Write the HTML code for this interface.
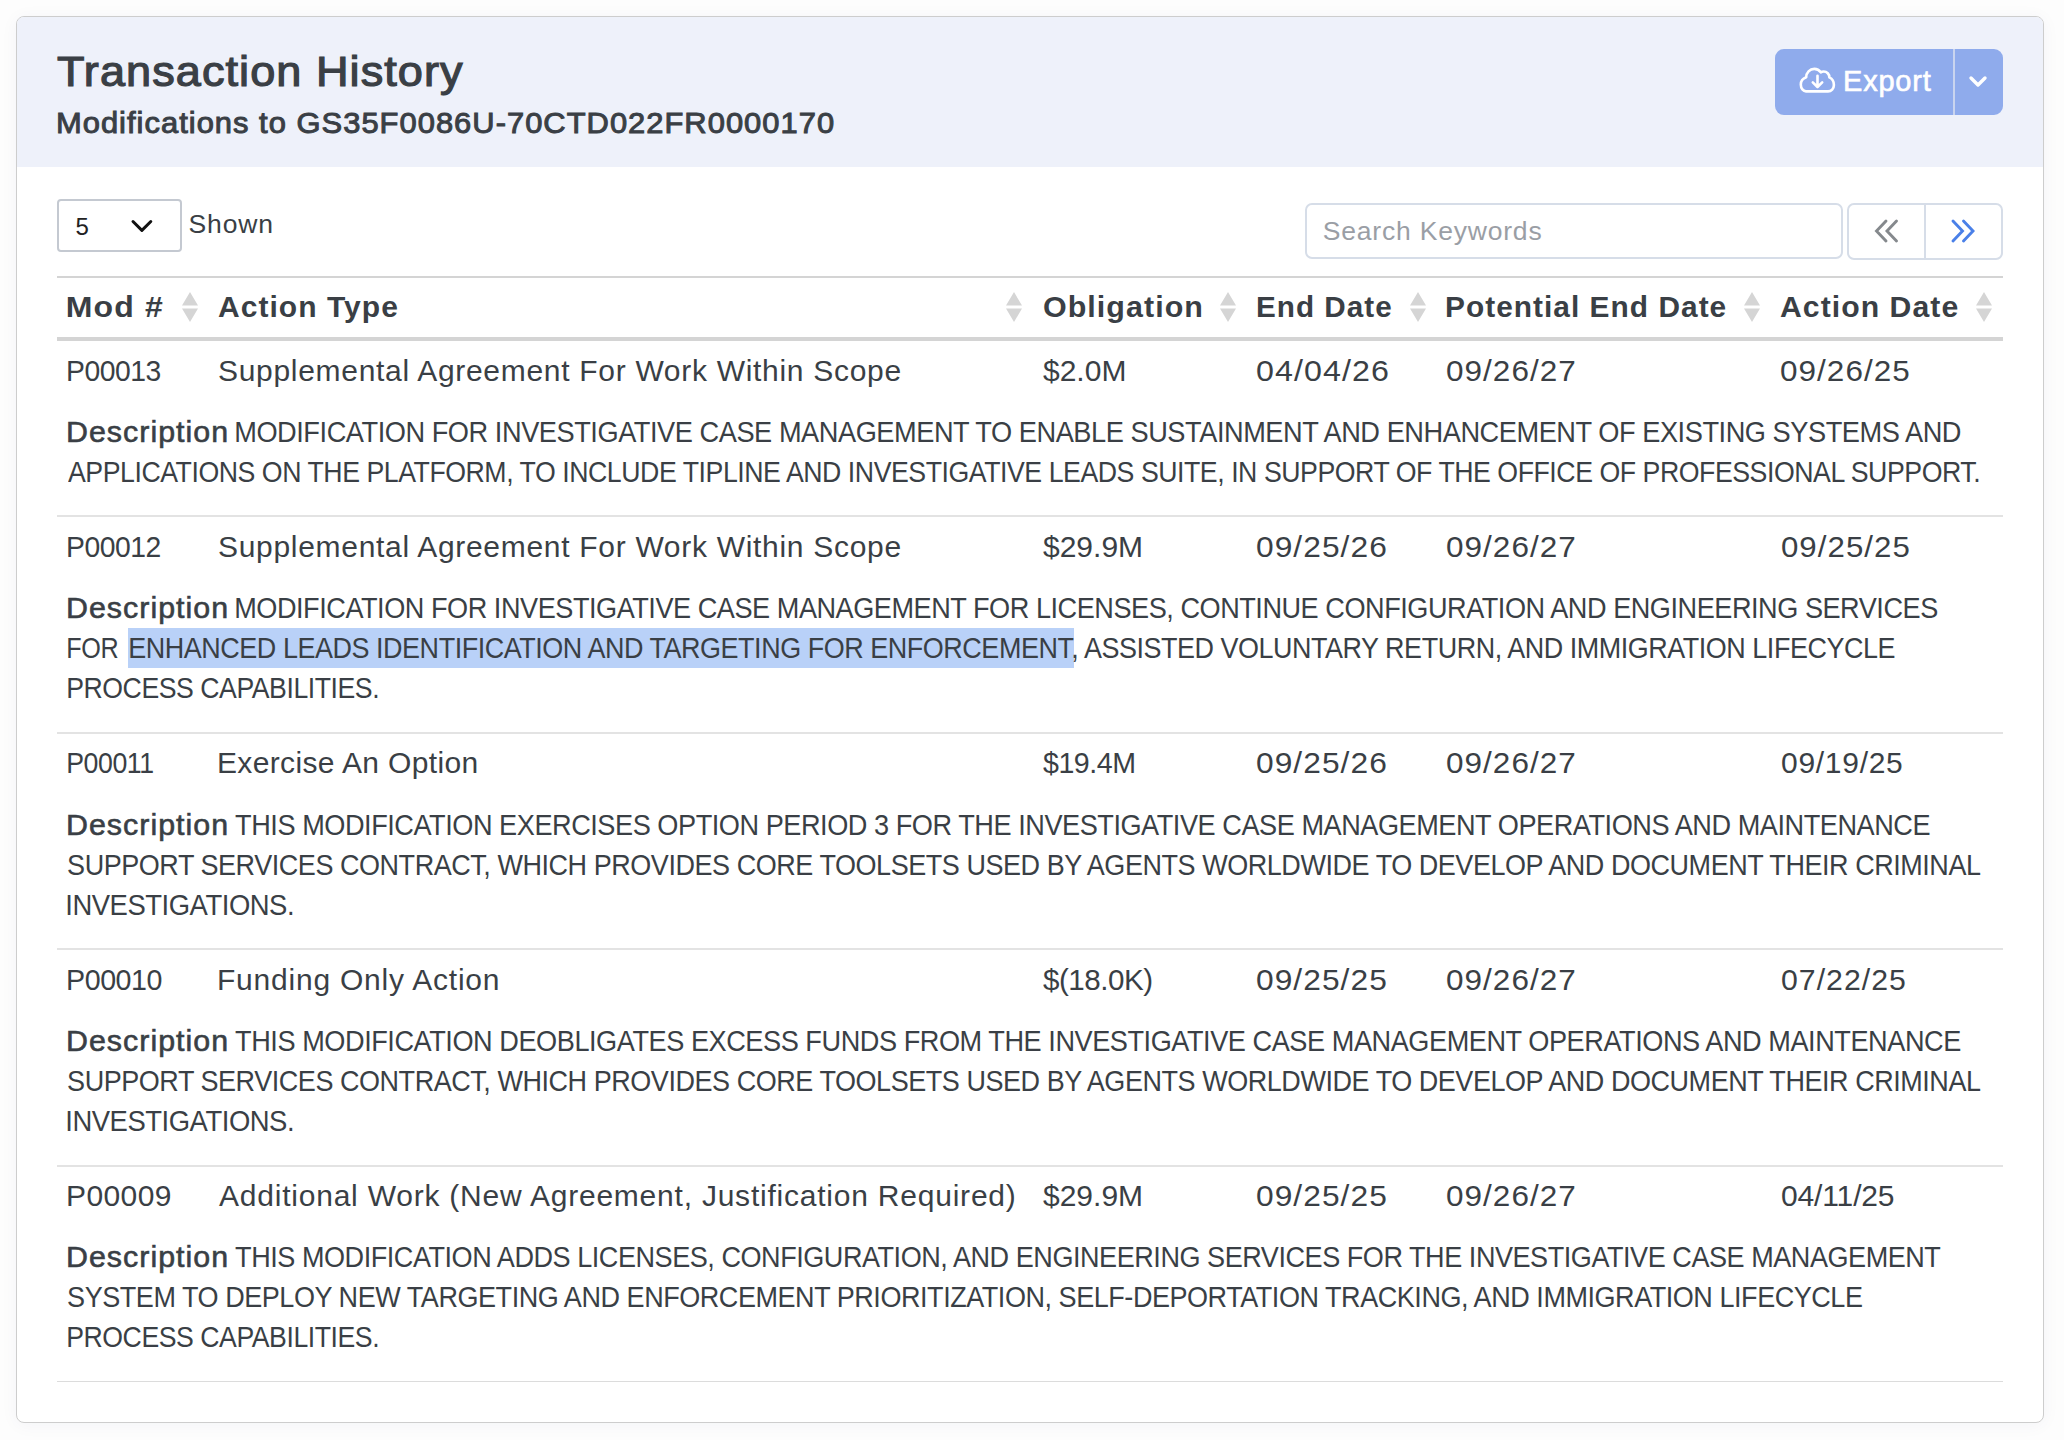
<!DOCTYPE html>
<html><head><meta charset="utf-8"><style>
html,body{margin:0;padding:0;background:#fdfdfd;width:2064px;height:1440px;overflow:hidden}
body{position:relative;font-family:"Liberation Sans",sans-serif}
.card{position:absolute;left:16px;top:16px;width:2026px;height:1405px;border:1px solid #cdcdcd;border-radius:8px;background:#fff;box-shadow:0 2px 18px rgba(30,50,110,0.045);overflow:hidden}
.hdr{position:absolute;left:0;top:0;right:0;height:150px;background:#eef1fa}
.t{position:absolute;white-space:nowrap}
.s{position:absolute;width:18px;height:32px}
.hr{position:absolute;left:57px;width:1946px;height:2px;background:#e3e3e3}
</style></head><body>
<div class="card"><div class="hdr"></div></div>
<!-- export button -->
<div style="position:absolute;left:1775px;top:49px;width:228px;height:66px;border-radius:9px;background:#8fabec"></div>
<div style="position:absolute;left:1953px;top:49px;width:2px;height:66px;background:#c9d4ef"></div>
<svg style="position:absolute;left:1795px;top:60px" width="45" height="40" viewBox="0 0 45 40">
<path d="M11 31.4 H33 C36.3 31.4 38.9 28.6 38.9 25 C38.9 21.4 36.8 18.6 34.4 17.4 C34.4 14.2 31.9 11.5 28.7 11.5 C27.6 11.5 26.6 11.8 25.8 12.3 C24.3 10.2 21.9 8.9 19.3 8.9 C14.8 8.9 11.2 12.6 11.2 17.3 C8.2 18.4 5.8 21.2 5.8 24.6 C5.8 28.4 8.3 31.4 11 31.4 Z" fill="none" stroke="#fff" stroke-width="2.6" stroke-linejoin="round"/>
<path d="M22.5 15.8 V27 M17.8 22.3 L22.5 27 L27.2 22.3" fill="none" stroke="#fff" stroke-width="2.6" stroke-linecap="round" stroke-linejoin="round"/>
</svg>
<svg style="position:absolute;left:1968px;top:74px" width="20" height="16" viewBox="0 0 20 16"><path d="M3 4 L10 11 L17 4" fill="none" stroke="#fff" stroke-width="3.4" stroke-linecap="round" stroke-linejoin="round"/></svg>
<!-- select -->
<div style="position:absolute;left:57px;top:199px;width:121px;height:49px;border:2px solid #c4c9d1;border-radius:4px;background:#fff"></div>
<svg style="position:absolute;left:128px;top:216px" width="28" height="20" viewBox="0 0 28 20"><path d="M5 5.5 L13.9 14.4 L22.8 5.5" fill="none" stroke="#111" stroke-width="3" stroke-linecap="round" stroke-linejoin="round"/></svg>
<!-- search -->
<div style="position:absolute;left:1305px;top:203px;width:534px;height:52px;border:2px solid #d6dde8;border-radius:7px;background:#fff"></div>
<div style="position:absolute;left:1847px;top:203px;width:152px;height:53px;border:2px solid #d6dde8;border-radius:7px;background:#fff"></div>
<div style="position:absolute;left:1924px;top:204px;width:2px;height:55px;background:#d6dde8"></div>
<svg style="position:absolute;left:1870px;top:215px" width="32" height="32" viewBox="0 0 32 32"><path d="M16 6 L6.5 16 L16 26 M26.5 6 L17 16 L26.5 26" fill="none" stroke="#85898d" stroke-width="2.9" stroke-linecap="round" stroke-linejoin="miter"/></svg>
<svg style="position:absolute;left:1947px;top:215px" width="32" height="32" viewBox="0 0 32 32"><path d="M6 6 L15.5 16 L6 26 M16.5 6 L26 16 L16.5 26" fill="none" stroke="#4a80e8" stroke-width="2.9" stroke-linecap="round" stroke-linejoin="miter"/></svg>
<!-- table lines -->
<div style="position:absolute;left:57px;top:276px;width:1946px;height:2px;background:#d4d4d4"></div>
<div style="position:absolute;left:57px;top:337px;width:1946px;height:4px;background:#d4d4d4"></div>
<div class="hr" style="top:515px"></div><div class="hr" style="top:732px"></div><div class="hr" style="top:948px"></div><div class="hr" style="top:1165px"></div>
<div style="position:absolute;left:57px;top:1381px;width:1946px;height:1px;background:#dcdcdc"></div>
<div class="s" style="left:181.0px;top:291px"><svg width="18" height="32" viewBox="0 0 18 32"><path d="M9 1 L17 14.5 L1 14.5 Z M1 17.5 L17 17.5 L9 31 Z" fill="#d5d5d5"/></svg></div><div class="s" style="left:1004.5px;top:291px"><svg width="18" height="32" viewBox="0 0 18 32"><path d="M9 1 L17 14.5 L1 14.5 Z M1 17.5 L17 17.5 L9 31 Z" fill="#d5d5d5"/></svg></div><div class="s" style="left:1219.0px;top:291px"><svg width="18" height="32" viewBox="0 0 18 32"><path d="M9 1 L17 14.5 L1 14.5 Z M1 17.5 L17 17.5 L9 31 Z" fill="#d5d5d5"/></svg></div><div class="s" style="left:1408.5px;top:291px"><svg width="18" height="32" viewBox="0 0 18 32"><path d="M9 1 L17 14.5 L1 14.5 Z M1 17.5 L17 17.5 L9 31 Z" fill="#d5d5d5"/></svg></div><div class="s" style="left:1742.5px;top:291px"><svg width="18" height="32" viewBox="0 0 18 32"><path d="M9 1 L17 14.5 L1 14.5 Z M1 17.5 L17 17.5 L9 31 Z" fill="#d5d5d5"/></svg></div><div class="s" style="left:1975.0px;top:291px"><svg width="18" height="32" viewBox="0 0 18 32"><path d="M9 1 L17 14.5 L1 14.5 Z M1 17.5 L17 17.5 L9 31 Z" fill="#d5d5d5"/></svg></div>
<!-- highlight -->
<div style="position:absolute;left:128px;top:628px;width:946px;height:40px;background:#b9d1f8"></div>
<div class="t" style="left:57.0px;top:51.2px;font-size:42.5px;line-height:42.5px;font-weight:400;color:#3a3f45;letter-spacing:1.000px;transform:scaleX(1.0604);transform-origin:1px 0;-webkit-text-stroke:1.2px #3a3f45">Transaction History</div>
<div class="t" style="left:56.0px;top:107.6px;font-size:30px;line-height:30px;font-weight:400;color:#3a3f45;letter-spacing:1.000px;transform:scaleX(1.0292);transform-origin:2px 0;-webkit-text-stroke:1.0px #3a3f45">Modifications to GS35F0086U-70CTD022FR0000170</div>
<div class="t" style="left:1843.0px;top:66.7px;font-size:29px;line-height:29px;font-weight:400;color:#ffffff;letter-spacing:0.800px;transform:scaleX(1.0000);transform-origin:2px 0;-webkit-text-stroke:0.6px #fff">Export</div>
<div class="t" style="left:188.5px;top:211.0px;font-size:26.5px;line-height:26.5px;font-weight:400;color:#3a3f45;letter-spacing:0.875px;transform:scaleX(1.0000);transform-origin:1px 0">Shown</div>
<div class="t" style="left:1322.7px;top:217.8px;font-size:26.5px;line-height:26.5px;font-weight:400;color:#9a9ea5;letter-spacing:0.807px;transform:scaleX(1.0000);transform-origin:1px 0">Search Keywords</div>
<div class="t" style="left:75.5px;top:214.5px;font-size:24px;line-height:24px;font-weight:400;color:#222;letter-spacing:0.000px;transform:scaleX(1.0000);transform-origin:1px 0">5</div>
<div class="t" style="left:66.0px;top:292.7px;font-size:29px;line-height:29px;font-weight:700;color:#3a3f45;letter-spacing:1.000px;transform:scaleX(1.1047);transform-origin:2px 0">Mod #</div>
<div class="t" style="left:218.0px;top:292.7px;font-size:29px;line-height:29px;font-weight:700;color:#3a3f45;letter-spacing:1.000px;transform:scaleX(1.0349);transform-origin:1px 0">Action Type</div>
<div class="t" style="left:1042.5px;top:292.7px;font-size:29px;line-height:29px;font-weight:700;color:#3a3f45;letter-spacing:1.000px;transform:scaleX(1.0500);transform-origin:1px 0">Obligation</div>
<div class="t" style="left:1256.0px;top:292.7px;font-size:29px;line-height:29px;font-weight:700;color:#3a3f45;letter-spacing:1.000px;transform:scaleX(1.0231);transform-origin:2px 0">End Date</div>
<div class="t" style="left:1445.0px;top:292.7px;font-size:29px;line-height:29px;font-weight:700;color:#3a3f45;letter-spacing:1.000px;transform:scaleX(1.0296);transform-origin:2px 0">Potential End Date</div>
<div class="t" style="left:1780.0px;top:292.7px;font-size:29px;line-height:29px;font-weight:700;color:#3a3f45;letter-spacing:1.000px;transform:scaleX(1.0414);transform-origin:1px 0">Action Date</div>
<div class="t" style="left:66.0px;top:355.6px;font-size:30px;line-height:30px;font-weight:400;color:#3a3f45;letter-spacing:-0.500px;transform:scaleX(0.9436);transform-origin:2px 0">P00013</div>
<div class="t" style="left:218.0px;top:355.6px;font-size:30px;line-height:30px;font-weight:400;color:#3a3f45;letter-spacing:0.698px;transform:scaleX(1.0000);transform-origin:1px 0">Supplemental Agreement For Work Within Scope</div>
<div class="t" style="left:1043.0px;top:355.6px;font-size:30px;line-height:30px;font-weight:400;color:#3a3f45;letter-spacing:0.000px;transform:scaleX(1.0000);transform-origin:0px 0">$2.0M</div>
<div class="t" style="left:1256.0px;top:355.6px;font-size:30px;line-height:30px;font-weight:400;color:#3a3f45;letter-spacing:1.000px;transform:scaleX(1.0738);transform-origin:1px 0">04/04/26</div>
<div class="t" style="left:1446.0px;top:355.6px;font-size:30px;line-height:30px;font-weight:400;color:#3a3f45;letter-spacing:1.000px;transform:scaleX(1.0496);transform-origin:1px 0">09/26/27</div>
<div class="t" style="left:1780.0px;top:355.6px;font-size:30px;line-height:30px;font-weight:400;color:#3a3f45;letter-spacing:1.000px;transform:scaleX(1.0492);transform-origin:1px 0">09/26/25</div>
<div class="t" style="left:66.0px;top:531.6px;font-size:30px;line-height:30px;font-weight:400;color:#3a3f45;letter-spacing:-0.500px;transform:scaleX(0.9436);transform-origin:2px 0">P00012</div>
<div class="t" style="left:218.0px;top:531.6px;font-size:30px;line-height:30px;font-weight:400;color:#3a3f45;letter-spacing:0.698px;transform:scaleX(1.0000);transform-origin:1px 0">Supplemental Agreement For Work Within Scope</div>
<div class="t" style="left:1043.0px;top:531.6px;font-size:30px;line-height:30px;font-weight:400;color:#3a3f45;letter-spacing:0.000px;transform:scaleX(1.0000);transform-origin:0px 0">$29.9M</div>
<div class="t" style="left:1256.0px;top:531.6px;font-size:30px;line-height:30px;font-weight:400;color:#3a3f45;letter-spacing:1.000px;transform:scaleX(1.0574);transform-origin:1px 0">09/25/26</div>
<div class="t" style="left:1446.0px;top:531.6px;font-size:30px;line-height:30px;font-weight:400;color:#3a3f45;letter-spacing:1.000px;transform:scaleX(1.0496);transform-origin:1px 0">09/26/27</div>
<div class="t" style="left:1781.0px;top:531.6px;font-size:30px;line-height:30px;font-weight:400;color:#3a3f45;letter-spacing:1.000px;transform:scaleX(1.0410);transform-origin:1px 0">09/25/25</div>
<div class="t" style="left:66.0px;top:747.6px;font-size:30px;line-height:30px;font-weight:400;color:#3a3f45;letter-spacing:-0.500px;transform:scaleX(0.8901);transform-origin:2px 0">P00011</div>
<div class="t" style="left:217.0px;top:747.6px;font-size:30px;line-height:30px;font-weight:400;color:#3a3f45;letter-spacing:0.353px;transform:scaleX(1.0000);transform-origin:2px 0">Exercise An Option</div>
<div class="t" style="left:1043.0px;top:747.6px;font-size:30px;line-height:30px;font-weight:400;color:#3a3f45;letter-spacing:-0.500px;transform:scaleX(0.9529);transform-origin:0px 0">$19.4M</div>
<div class="t" style="left:1256.0px;top:747.6px;font-size:30px;line-height:30px;font-weight:400;color:#3a3f45;letter-spacing:1.000px;transform:scaleX(1.0574);transform-origin:1px 0">09/25/26</div>
<div class="t" style="left:1446.0px;top:747.6px;font-size:30px;line-height:30px;font-weight:400;color:#3a3f45;letter-spacing:1.000px;transform:scaleX(1.0496);transform-origin:1px 0">09/26/27</div>
<div class="t" style="left:1781.0px;top:747.6px;font-size:30px;line-height:30px;font-weight:400;color:#3a3f45;letter-spacing:0.714px;transform:scaleX(1.0000);transform-origin:1px 0">09/19/25</div>
<div class="t" style="left:66.0px;top:964.6px;font-size:30px;line-height:30px;font-weight:400;color:#3a3f45;letter-spacing:-0.500px;transform:scaleX(0.9538);transform-origin:2px 0">P00010</div>
<div class="t" style="left:217.0px;top:964.6px;font-size:30px;line-height:30px;font-weight:400;color:#3a3f45;letter-spacing:0.778px;transform:scaleX(1.0000);transform-origin:2px 0">Funding Only Action</div>
<div class="t" style="left:1043.0px;top:964.6px;font-size:30px;line-height:30px;font-weight:400;color:#3a3f45;letter-spacing:-0.500px;transform:scaleX(0.9863);transform-origin:0px 0">$(18.0K)</div>
<div class="t" style="left:1256.0px;top:964.6px;font-size:30px;line-height:30px;font-weight:400;color:#3a3f45;letter-spacing:1.000px;transform:scaleX(1.0574);transform-origin:1px 0">09/25/25</div>
<div class="t" style="left:1446.0px;top:964.6px;font-size:30px;line-height:30px;font-weight:400;color:#3a3f45;letter-spacing:1.000px;transform:scaleX(1.0496);transform-origin:1px 0">09/26/27</div>
<div class="t" style="left:1781.0px;top:964.6px;font-size:30px;line-height:30px;font-weight:400;color:#3a3f45;letter-spacing:1.000px;transform:scaleX(1.0082);transform-origin:1px 0">07/22/25</div>
<div class="t" style="left:66.0px;top:1181.1px;font-size:30px;line-height:30px;font-weight:400;color:#3a3f45;letter-spacing:0.400px;transform:scaleX(1.0000);transform-origin:2px 0">P00009</div>
<div class="t" style="left:219.0px;top:1181.1px;font-size:30px;line-height:30px;font-weight:400;color:#3a3f45;letter-spacing:0.778px;transform:scaleX(1.0000);transform-origin:0px 0">Additional Work (New Agreement, Justification Required)</div>
<div class="t" style="left:1043.0px;top:1181.1px;font-size:30px;line-height:30px;font-weight:400;color:#3a3f45;letter-spacing:0.000px;transform:scaleX(1.0000);transform-origin:0px 0">$29.9M</div>
<div class="t" style="left:1256.0px;top:1181.1px;font-size:30px;line-height:30px;font-weight:400;color:#3a3f45;letter-spacing:1.000px;transform:scaleX(1.0574);transform-origin:1px 0">09/25/25</div>
<div class="t" style="left:1446.0px;top:1181.1px;font-size:30px;line-height:30px;font-weight:400;color:#3a3f45;letter-spacing:1.000px;transform:scaleX(1.0496);transform-origin:1px 0">09/26/27</div>
<div class="t" style="left:1781.0px;top:1181.1px;font-size:30px;line-height:30px;font-weight:400;color:#3a3f45;letter-spacing:-0.143px;transform:scaleX(1.0000);transform-origin:1px 0">04/11/25</div>
<div class="t" style="left:66.0px;top:416.6px;font-size:30px;line-height:30px;font-weight:400;color:#3a3f45;letter-spacing:1.000px;transform:scaleX(1.0128);transform-origin:2px 0;-webkit-text-stroke:0.6px #3a3f45">Description</div>
<div class="t" style="left:233.5px;top:416.6px;font-size:30px;line-height:30px;font-weight:400;color:#3a3f45;letter-spacing:-0.500px;transform:scaleX(0.9064);transform-origin:2px 0">MODIFICATION FOR INVESTIGATIVE CASE MANAGEMENT TO ENABLE SUSTAINMENT AND ENHANCEMENT OF EXISTING SYSTEMS AND</div>
<div class="t" style="left:68.0px;top:456.6px;font-size:30px;line-height:30px;font-weight:400;color:#3a3f45;letter-spacing:-0.500px;transform:scaleX(0.8892);transform-origin:0px 0">APPLICATIONS ON THE PLATFORM, TO INCLUDE TIPLINE AND INVESTIGATIVE LEADS SUITE, IN SUPPORT OF THE OFFICE OF PROFESSIONAL SUPPORT.</div>
<div class="t" style="left:66.0px;top:592.6px;font-size:30px;line-height:30px;font-weight:400;color:#3a3f45;letter-spacing:1.000px;transform:scaleX(1.0128);transform-origin:2px 0;-webkit-text-stroke:0.6px #3a3f45">Description</div>
<div class="t" style="left:233.5px;top:592.6px;font-size:30px;line-height:30px;font-weight:400;color:#3a3f45;letter-spacing:-0.500px;transform:scaleX(0.9029);transform-origin:2px 0">MODIFICATION FOR INVESTIGATIVE CASE MANAGEMENT FOR LICENSES, CONTINUE CONFIGURATION AND ENGINEERING SERVICES</div>
<div class="t" style="left:66.0px;top:632.6px;font-size:30px;line-height:30px;font-weight:400;color:#3a3f45;letter-spacing:-0.500px;transform:scaleX(0.8390);transform-origin:2px 0">FOR</div>
<div class="t" style="left:127.5px;top:632.6px;font-size:30px;line-height:30px;font-weight:400;color:#3a3f45;letter-spacing:-0.500px;transform:scaleX(0.8983);transform-origin:2px 0">ENHANCED LEADS IDENTIFICATION AND TARGETING FOR ENFORCEMENT</div>
<div class="t" style="left:1071.0px;top:632.6px;font-size:30px;line-height:30px;font-weight:400;color:#3a3f45;letter-spacing:-0.500px;transform:scaleX(0.8976);transform-origin:3px 0">, ASSISTED VOLUNTARY RETURN, AND IMMIGRATION LIFECYCLE</div>
<div class="t" style="left:66.0px;top:672.6px;font-size:30px;line-height:30px;font-weight:400;color:#3a3f45;letter-spacing:-0.500px;transform:scaleX(0.8879);transform-origin:2px 0">PROCESS CAPABILITIES.</div>
<div class="t" style="left:66.0px;top:809.6px;font-size:30px;line-height:30px;font-weight:400;color:#3a3f45;letter-spacing:1.000px;transform:scaleX(1.0128);transform-origin:2px 0;-webkit-text-stroke:0.6px #3a3f45">Description</div>
<div class="t" style="left:234.5px;top:809.6px;font-size:30px;line-height:30px;font-weight:400;color:#3a3f45;letter-spacing:-0.500px;transform:scaleX(0.9039);transform-origin:1px 0">THIS MODIFICATION EXERCISES OPTION PERIOD 3 FOR THE INVESTIGATIVE CASE MANAGEMENT OPERATIONS AND MAINTENANCE</div>
<div class="t" style="left:67.0px;top:849.6px;font-size:30px;line-height:30px;font-weight:400;color:#3a3f45;letter-spacing:-0.500px;transform:scaleX(0.8998);transform-origin:1px 0">SUPPORT SERVICES CONTRACT, WHICH PROVIDES CORE TOOLSETS USED BY AGENTS WORLDWIDE TO DEVELOP AND DOCUMENT THEIR CRIMINAL</div>
<div class="t" style="left:65.0px;top:889.6px;font-size:30px;line-height:30px;font-weight:400;color:#3a3f45;letter-spacing:-0.500px;transform:scaleX(0.9143);transform-origin:3px 0">INVESTIGATIONS.</div>
<div class="t" style="left:66.0px;top:1025.6px;font-size:30px;line-height:30px;font-weight:400;color:#3a3f45;letter-spacing:1.000px;transform:scaleX(1.0128);transform-origin:2px 0;-webkit-text-stroke:0.6px #3a3f45">Description</div>
<div class="t" style="left:234.5px;top:1025.6px;font-size:30px;line-height:30px;font-weight:400;color:#3a3f45;letter-spacing:-0.500px;transform:scaleX(0.9045);transform-origin:1px 0">THIS MODIFICATION DEOBLIGATES EXCESS FUNDS FROM THE INVESTIGATIVE CASE MANAGEMENT OPERATIONS AND MAINTENANCE</div>
<div class="t" style="left:67.0px;top:1065.6px;font-size:30px;line-height:30px;font-weight:400;color:#3a3f45;letter-spacing:-0.500px;transform:scaleX(0.8998);transform-origin:1px 0">SUPPORT SERVICES CONTRACT, WHICH PROVIDES CORE TOOLSETS USED BY AGENTS WORLDWIDE TO DEVELOP AND DOCUMENT THEIR CRIMINAL</div>
<div class="t" style="left:65.0px;top:1105.6px;font-size:30px;line-height:30px;font-weight:400;color:#3a3f45;letter-spacing:-0.500px;transform:scaleX(0.9143);transform-origin:3px 0">INVESTIGATIONS.</div>
<div class="t" style="left:66.0px;top:1241.6px;font-size:30px;line-height:30px;font-weight:400;color:#3a3f45;letter-spacing:1.000px;transform:scaleX(1.0128);transform-origin:2px 0;-webkit-text-stroke:0.6px #3a3f45">Description</div>
<div class="t" style="left:234.5px;top:1241.6px;font-size:30px;line-height:30px;font-weight:400;color:#3a3f45;letter-spacing:-0.500px;transform:scaleX(0.9011);transform-origin:1px 0">THIS MODIFICATION ADDS LICENSES, CONFIGURATION, AND ENGINEERING SERVICES FOR THE INVESTIGATIVE CASE MANAGEMENT</div>
<div class="t" style="left:67.0px;top:1281.6px;font-size:30px;line-height:30px;font-weight:400;color:#3a3f45;letter-spacing:-0.500px;transform:scaleX(0.9002);transform-origin:1px 0">SYSTEM TO DEPLOY NEW TARGETING AND ENFORCEMENT PRIORITIZATION, SELF-DEPORTATION TRACKING, AND IMMIGRATION LIFECYCLE</div>
<div class="t" style="left:66.0px;top:1321.6px;font-size:30px;line-height:30px;font-weight:400;color:#3a3f45;letter-spacing:-0.500px;transform:scaleX(0.8879);transform-origin:2px 0">PROCESS CAPABILITIES.</div>
</body></html>
